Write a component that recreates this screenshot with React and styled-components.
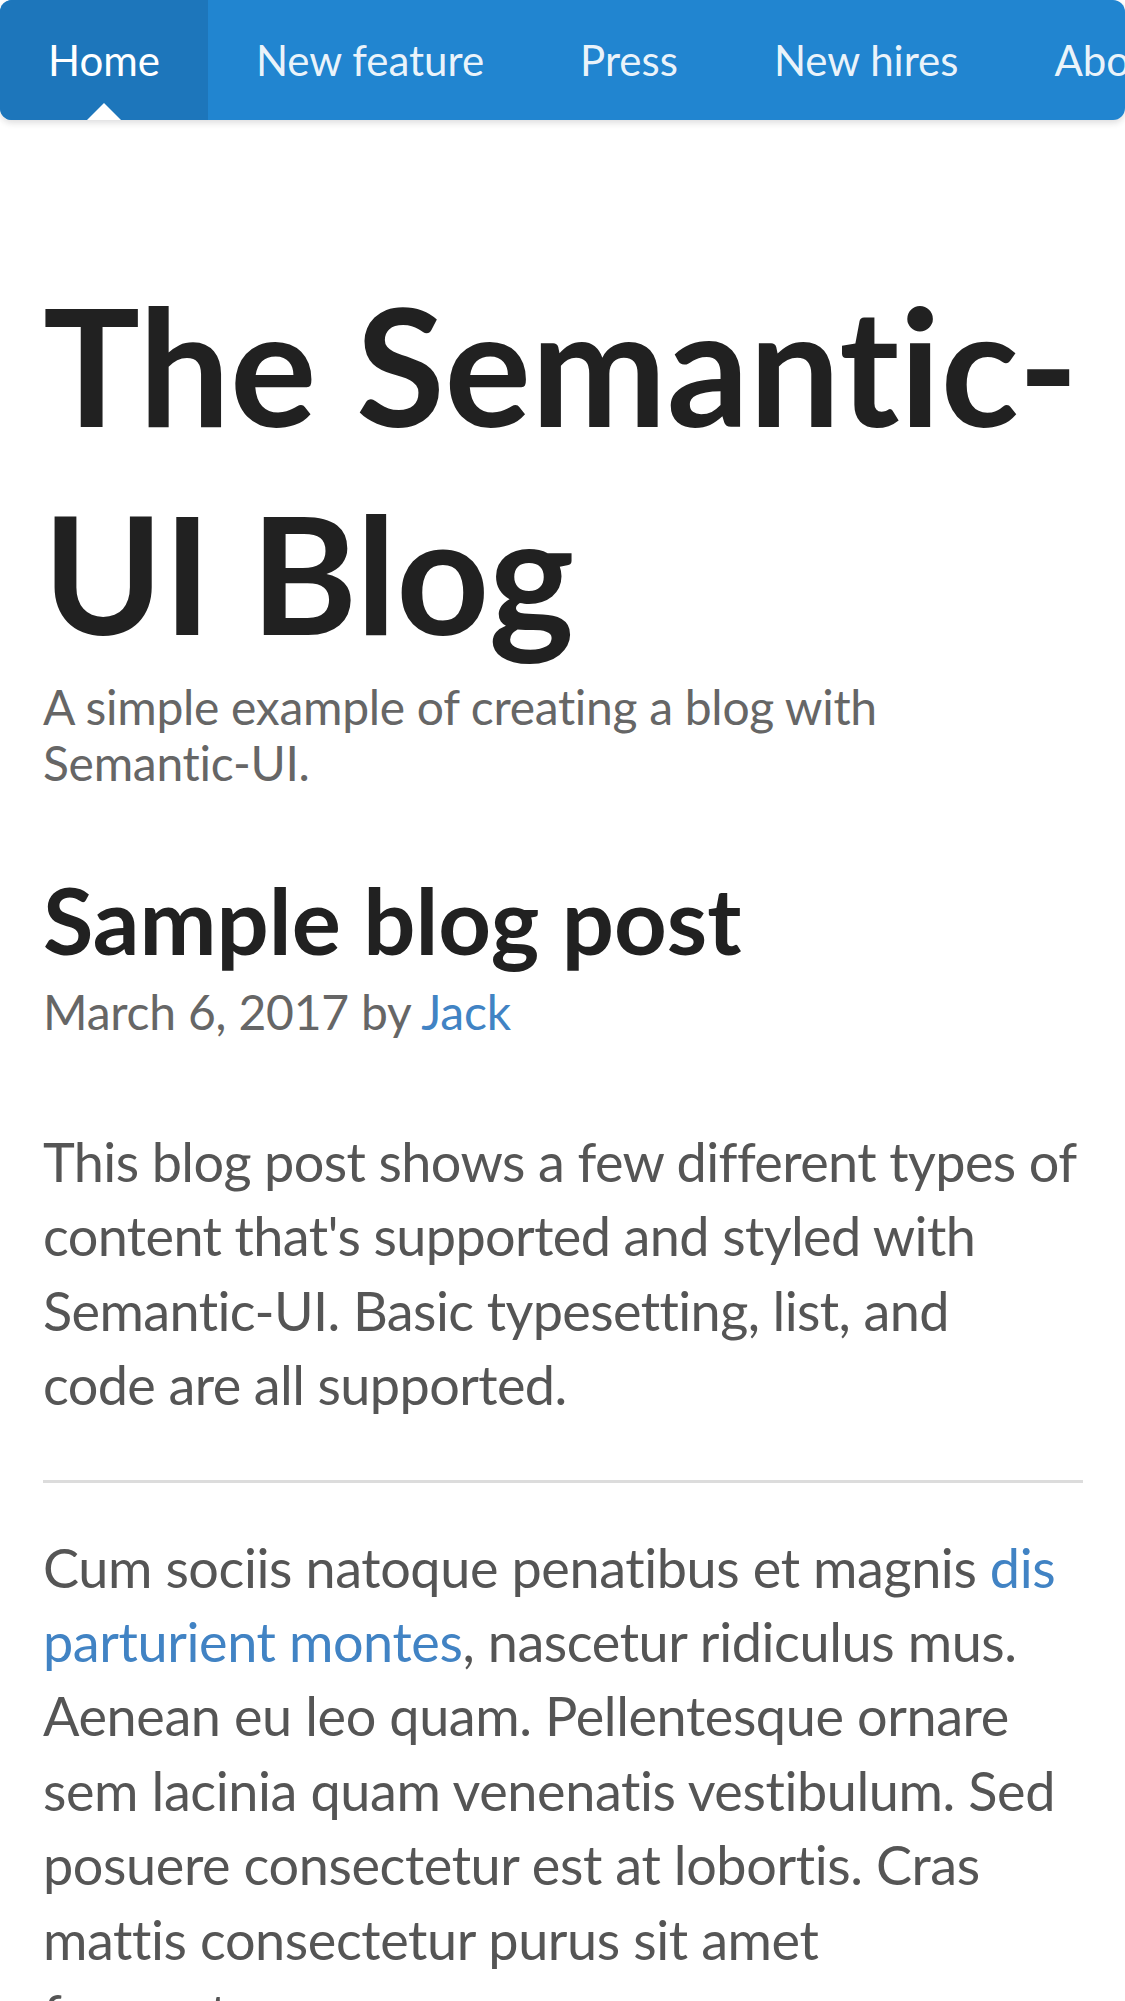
import React from 'react';
import styled, { createGlobalStyle } from 'styled-components';

const GlobalStyle = createGlobalStyle`
  html, body {
    margin: 0;
    padding: 0;
    background: #ffffff;
  }
  body {
    font-family: Lato, 'Helvetica Neue', Arial, sans-serif;
    overflow: hidden;
  }
  * {
    font-variant-ligatures: none;
    font-feature-settings: 'liga' 0, 'clig' 0, 'dlig' 0, 'calt' 0;
  }
`;

const navItems = ['Home', 'New feature', 'Press', 'New hires', 'About'];

export default function App() {
  return (
    <Page>
      <GlobalStyle />
      <Menu>
        {navItems.map((label, i) => (
          <MenuItem key={label} active={i === 0}>
            {label}
          </MenuItem>
        ))}
      </Menu>
      <Container>
        <Masthead>
          <Title>The Semantic-UI Blog</Title>
          <SubTitle>A simple example of creating a blog with Semantic-UI.</SubTitle>
        </Masthead>
        <Post>
          <PostTitle>Sample blog post</PostTitle>
          <Meta>
            March 6, 2017 by <Link href="#">Jack</Link>
          </Meta>
          <Lead>
            This blog post shows a few different types of content that's
            supported and styled with Semantic-UI. Basic typesetting, list, and
            <br />
            code are all supported.
          </Lead>
          <Divider />
          <Body>
            Cum sociis natoque penatibus et magnis{' '}
            <Link href="#">dis parturient montes</Link>, nascetur ridiculus
            mus. Aenean eu leo quam. Pellentesque ornare sem lacinia quam
            venenatis vestibulum. Sed posuere consectetur est at lobortis. Cras
            mattis consectetur purus sit amet fermentum.
          </Body>
        </Post>
      </Container>
    </Page>
  );
}

const Page = styled.div`
  width: 1125px;
  height: 2001px;
  overflow: hidden;
`;

const Menu = styled.nav`
  display: flex;
  height: 120px;
  background: #2185d0;
  border-radius: 12px;
  overflow: hidden;
  box-shadow: 0 3px 6px rgba(34, 36, 38, 0.15);
`;

const MenuItem = styled.a`
  position: relative;
  flex: none;
  display: flex;
  align-items: center;
  padding: 0 48px;
  font-size: 42px;
  line-height: 1;
  color: ${props => (props.active ? '#ffffff' : 'rgba(255, 255, 255, 0.92)')};
  background: ${props => (props.active ? '#1d76bb' : 'transparent')};
  white-space: nowrap;

  &::after {
    content: '';
    display: ${props => (props.active ? 'block' : 'none')};
    position: absolute;
    left: 50%;
    bottom: 0;
    transform: translateX(-50%);
    border-left: 17px solid transparent;
    border-right: 17px solid transparent;
    border-bottom: 17px solid #ffffff;
  }
`;

const Container = styled.main`
  padding: 0 42px 0 43px;
`;

const Masthead = styled.header`
  margin-top: 141px;
`;

const Title = styled.h1`
  margin: 0;
  font-size: 162px;
  line-height: 208px;
  font-weight: 700;
  color: #212121;
`;

const SubTitle = styled.div`
  margin-top: 2px;
  font-size: 48px;
  line-height: 56px;
  letter-spacing: -0.3px;
  color: #666666;
`;

const Post = styled.article`
  margin-top: 70px;
`;

const PostTitle = styled.h2`
  margin: 0;
  font-size: 92px;
  line-height: 118px;
  font-weight: 700;
  color: #212121;
`;

const Meta = styled.div`
  margin-top: 2px;
  font-size: 48px;
  line-height: 62px;
  letter-spacing: -0.2px;
  color: #666666;
`;

const Link = styled.a`
  color: #4183c4;
  text-decoration: none;
`;

const Lead = styled.p`
  margin: 82px 0 0;
  font-size: 54px;
  line-height: 74.4px;
  letter-spacing: -0.6px;
  color: #555555;
`;

const Divider = styled.hr`
  margin: 57px 0 0;
  border: 0;
  height: 3px;
  background: #dcdcdc;
`;

const Body = styled.p`
  margin: 48px 0 0;
  font-size: 54px;
  line-height: 74.4px;
  letter-spacing: -0.4px;
  color: #555555;
`;
